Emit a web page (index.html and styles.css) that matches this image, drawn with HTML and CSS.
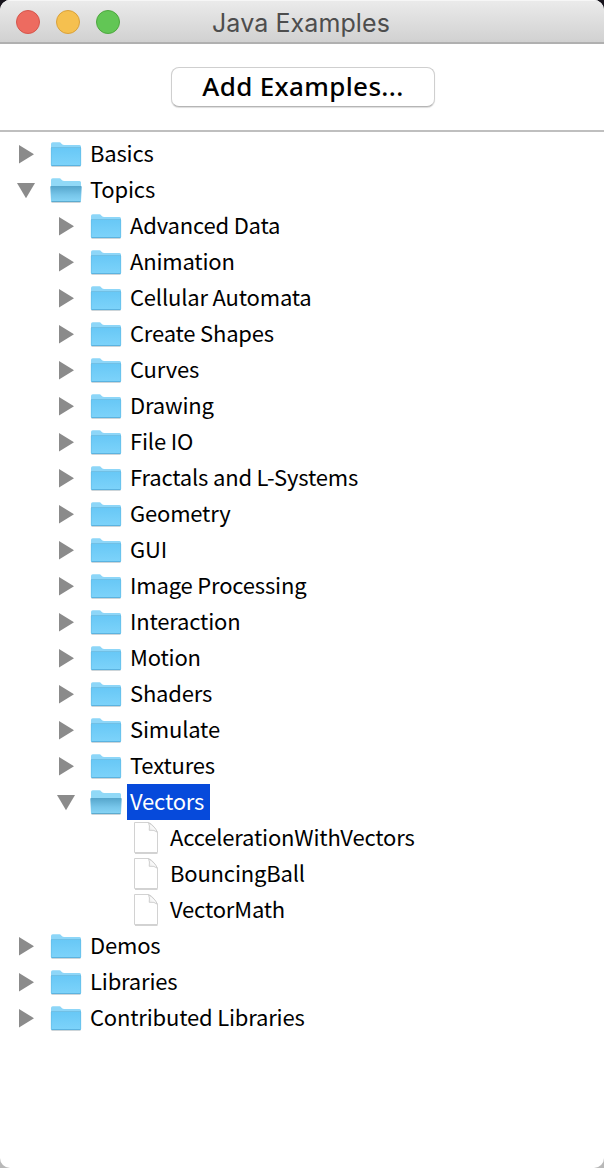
FILE: index.html
```html
<!DOCTYPE html>
<html lang="en">
<head>
<meta charset="utf-8">
<title>Java Examples</title>
<link rel="stylesheet" href="styles.css">
</head>
<body>
<svg class="defs" width="0" height="0" aria-hidden="true">
  <defs>
    <linearGradient id="front" x1="0" y1="0" x2="0" y2="1"><stop offset="0" stop-color="#68c8f6"/><stop offset="1" stop-color="#7dd3fa"/></linearGradient>
    <linearGradient id="open-front" x1="0" y1="0" x2="0" y2="1"><stop offset="0" stop-color="#55a5cb"/><stop offset=".55" stop-color="#76c5e9"/><stop offset="1" stop-color="#88d6f7"/></linearGradient>
    <linearGradient id="fold" x1="0" y1="1" x2="1" y2="0"><stop offset="0" stop-color="#e4e4e4"/><stop offset=".6" stop-color="#fff"/></linearGradient>
  </defs>
  <symbol id="right" viewBox="0 0 20 36"><path d="M3 9V27.600L18 18.200Z" fill="#8b8b8b"/></symbol>
  <symbol id="down" viewBox="0 0 20 36"><path d="M1 11H19L10 26.300Z" fill="#8b8b8b"/></symbol>
  <symbol id="folder" viewBox="0 0 32 36">
    <path d="M1.500 30.500h29" stroke="#cdd5d9"/>
    <path d="M1 29V8q0-1.700 1.700-1.700h6.800q1 0 1.800 1.200T14 9H29.500q1.500 0 1.500 1.500V29q0 1-1 1H2q-1 0-1-1Z" fill="#8dd6f8"/>
    <path d="M1 12H31V29q0 1-1 1H2q-1 0-1-1Z" fill="url(#front)"/>
    <path d="M1 11.500H31" stroke="#70c0e6"/>
    <path d="M1.500 29.500h29" stroke="#5bb3e0"/>
    <path d="M1.300 12V29M30.700 12V29" stroke="#61b8e2" stroke-width=".6"/>
  </symbol>
  <symbol id="open" viewBox="0 0 32 36">
    <path d="M1.500 30.500h29" stroke="#cdd5d9"/>
    <path d="M1 29V8q0-1.700 1.700-1.700h6.800q1 0 1.800 1.200T14 9H29.500q1.500 0 1.500 1.500V29H1Z" fill="#91d9f7"/>
    <path d="M.300 14.800q0-.8 1-.8H30.700q1 0 1 .8L31 29q0 1-1 1H2q-1 0-1-1Z" fill="url(#open-front)"/>
    <path d="M1.500 29.500h29" stroke="#5cabcf"/>
  </symbol>
  <symbol id="file" viewBox="0 0 32 36">
    <path d="M5 33.300H27.500" stroke="#c8c8c8"/>
    <path d="M4.500 2.500H18.500Q22 4 24 7T27.500 12.500V32.500H4.500Z" fill="#fff" stroke="#d2d2d2"/>
    <path d="M18.500 2.700Q20 5.500 19.200 10.300Q24.500 9.500 27.400 12.300Q26 9 24 7T18.500 2.700Z" fill="url(#fold)" stroke="#c4c4c4" stroke-width=".8"/>
  </symbol>
</svg>
<div class="window">
  <header class="titlebar">
    <div class="lights"><i class="light red"></i><i class="light yellow"></i><i class="light green"></i></div>
    <h1 class="title">Java Examples</h1>
  </header>
  <div class="toolbar"><button class="add">Add Examples...</button></div>
  <main class="tree" id="tree"></main>
</div>
<script src="tree.js"></script>
</body>
</html>
```
FILE: styles.css
```css
* { box-sizing: border-box; }
body { margin: 0; background: linear-gradient(#17141c 50%, #b8b8b8 50%); }
.defs { position: absolute; }
.window {
  width: 604px;
  height: 1168px;
  border-radius: 10px;
  overflow: hidden;
  background: #fff;
}
.titlebar {
  display: grid;
  grid-template-columns: 1fr auto 1fr;
  align-items: center;
  height: 44px;
  padding-left: 16px;
  padding-right: 18px;
  background: linear-gradient(#ebebeb, #d1d1d1);
  border-bottom: 2px solid #b0b0b0;
  box-shadow: inset 0 1px #f6f6f6;
}
.lights { display: flex; gap: 16px; padding-top: 2px; }
.light { width: 24px; height: 24px; border-radius: 50%; border: 1px solid; }
.red { background: #ed6b60; border-color: #d5564c; }
.yellow { background: #f5c04f; border-color: #d9a13b; }
.green { background: #62c655; border-color: #4ea73f; }
.title {
  margin: 0;
  padding-top: 3px;
  font: 400 25px/38px Inter, "Liberation Sans", sans-serif;
  letter-spacing: 0.1px;
  color: #4d4d4d;
}
.toolbar {
  display: flex;
  justify-content: center;
  height: 88px;
  padding-top: 23px;
  padding-left: 2px;
  border-bottom: 2px solid #bfbfbf;
}
.add {
  width: 264px;
  height: 40px;
  padding: 0 0 2px;
  border: 1px solid #cfcfcf;
  border-bottom-color: #b5b5b5;
  border-radius: 8px;
  background: #fff;
  box-shadow: 0 1px 1px #ddd;
  font: 500 26px/36px "Noto Sans", sans-serif;
  letter-spacing: 0.35px;
  color: #000;
  white-space: nowrap;
}
.tree {
  padding-top: 4px;
  font: 400 22px/32px "Noto Sans CJK SC", "Noto Sans", sans-serif;
  letter-spacing: -0.18px;
  color: #000;
}
.row { display: flex; height: 36px; padding-left: 16px; }
.level-1 { padding-left: 56px; }
.level-2 { padding-left: 96px; }
.arrow { width: 20px; height: 36px; margin-right: 14px; }
.icon { width: 32px; height: 36px; margin-right: 5px; }
.label { height: 36px; padding: 0 6px 0 3px; white-space: nowrap; }
.selected { background: #064adb; color: #fff; }
```
FILE: tree.js
```js
const rows = [
  [0, "Basics"], [0, "Topics", "open"],
  ...["Advanced Data", "Animation", "Cellular Automata", "Create Shapes", "Curves",
    "Drawing", "File IO", "Fractals and L-Systems", "Geometry", "GUI",
    "Image Processing", "Interaction", "Motion", "Shaders", "Simulate", "Textures"
  ].map(name => [1, name]),
  [1, "Vectors", "open", true],
  [2, "AccelerationWithVectors", "file"], [2, "BouncingBall", "file"], [2, "VectorMath", "file"],
  [0, "Demos"], [0, "Libraries"], [0, "Contributed Libraries"]
];
document.getElementById("tree").innerHTML = rows.map(([level, name, icon = "folder", selected]) => {
  const arrow = icon === "file" ? "" : `<use href="#${icon === "open" ? "down" : "right"}"/>`;
  return `<div class="row level-${level}">
    <svg class="arrow">${arrow}</svg>
    <svg class="icon"><use href="#${icon}"/></svg>
    <span class="label${selected ? " selected" : ""}">${name}</span>
  </div>`;
}).join("");
```
